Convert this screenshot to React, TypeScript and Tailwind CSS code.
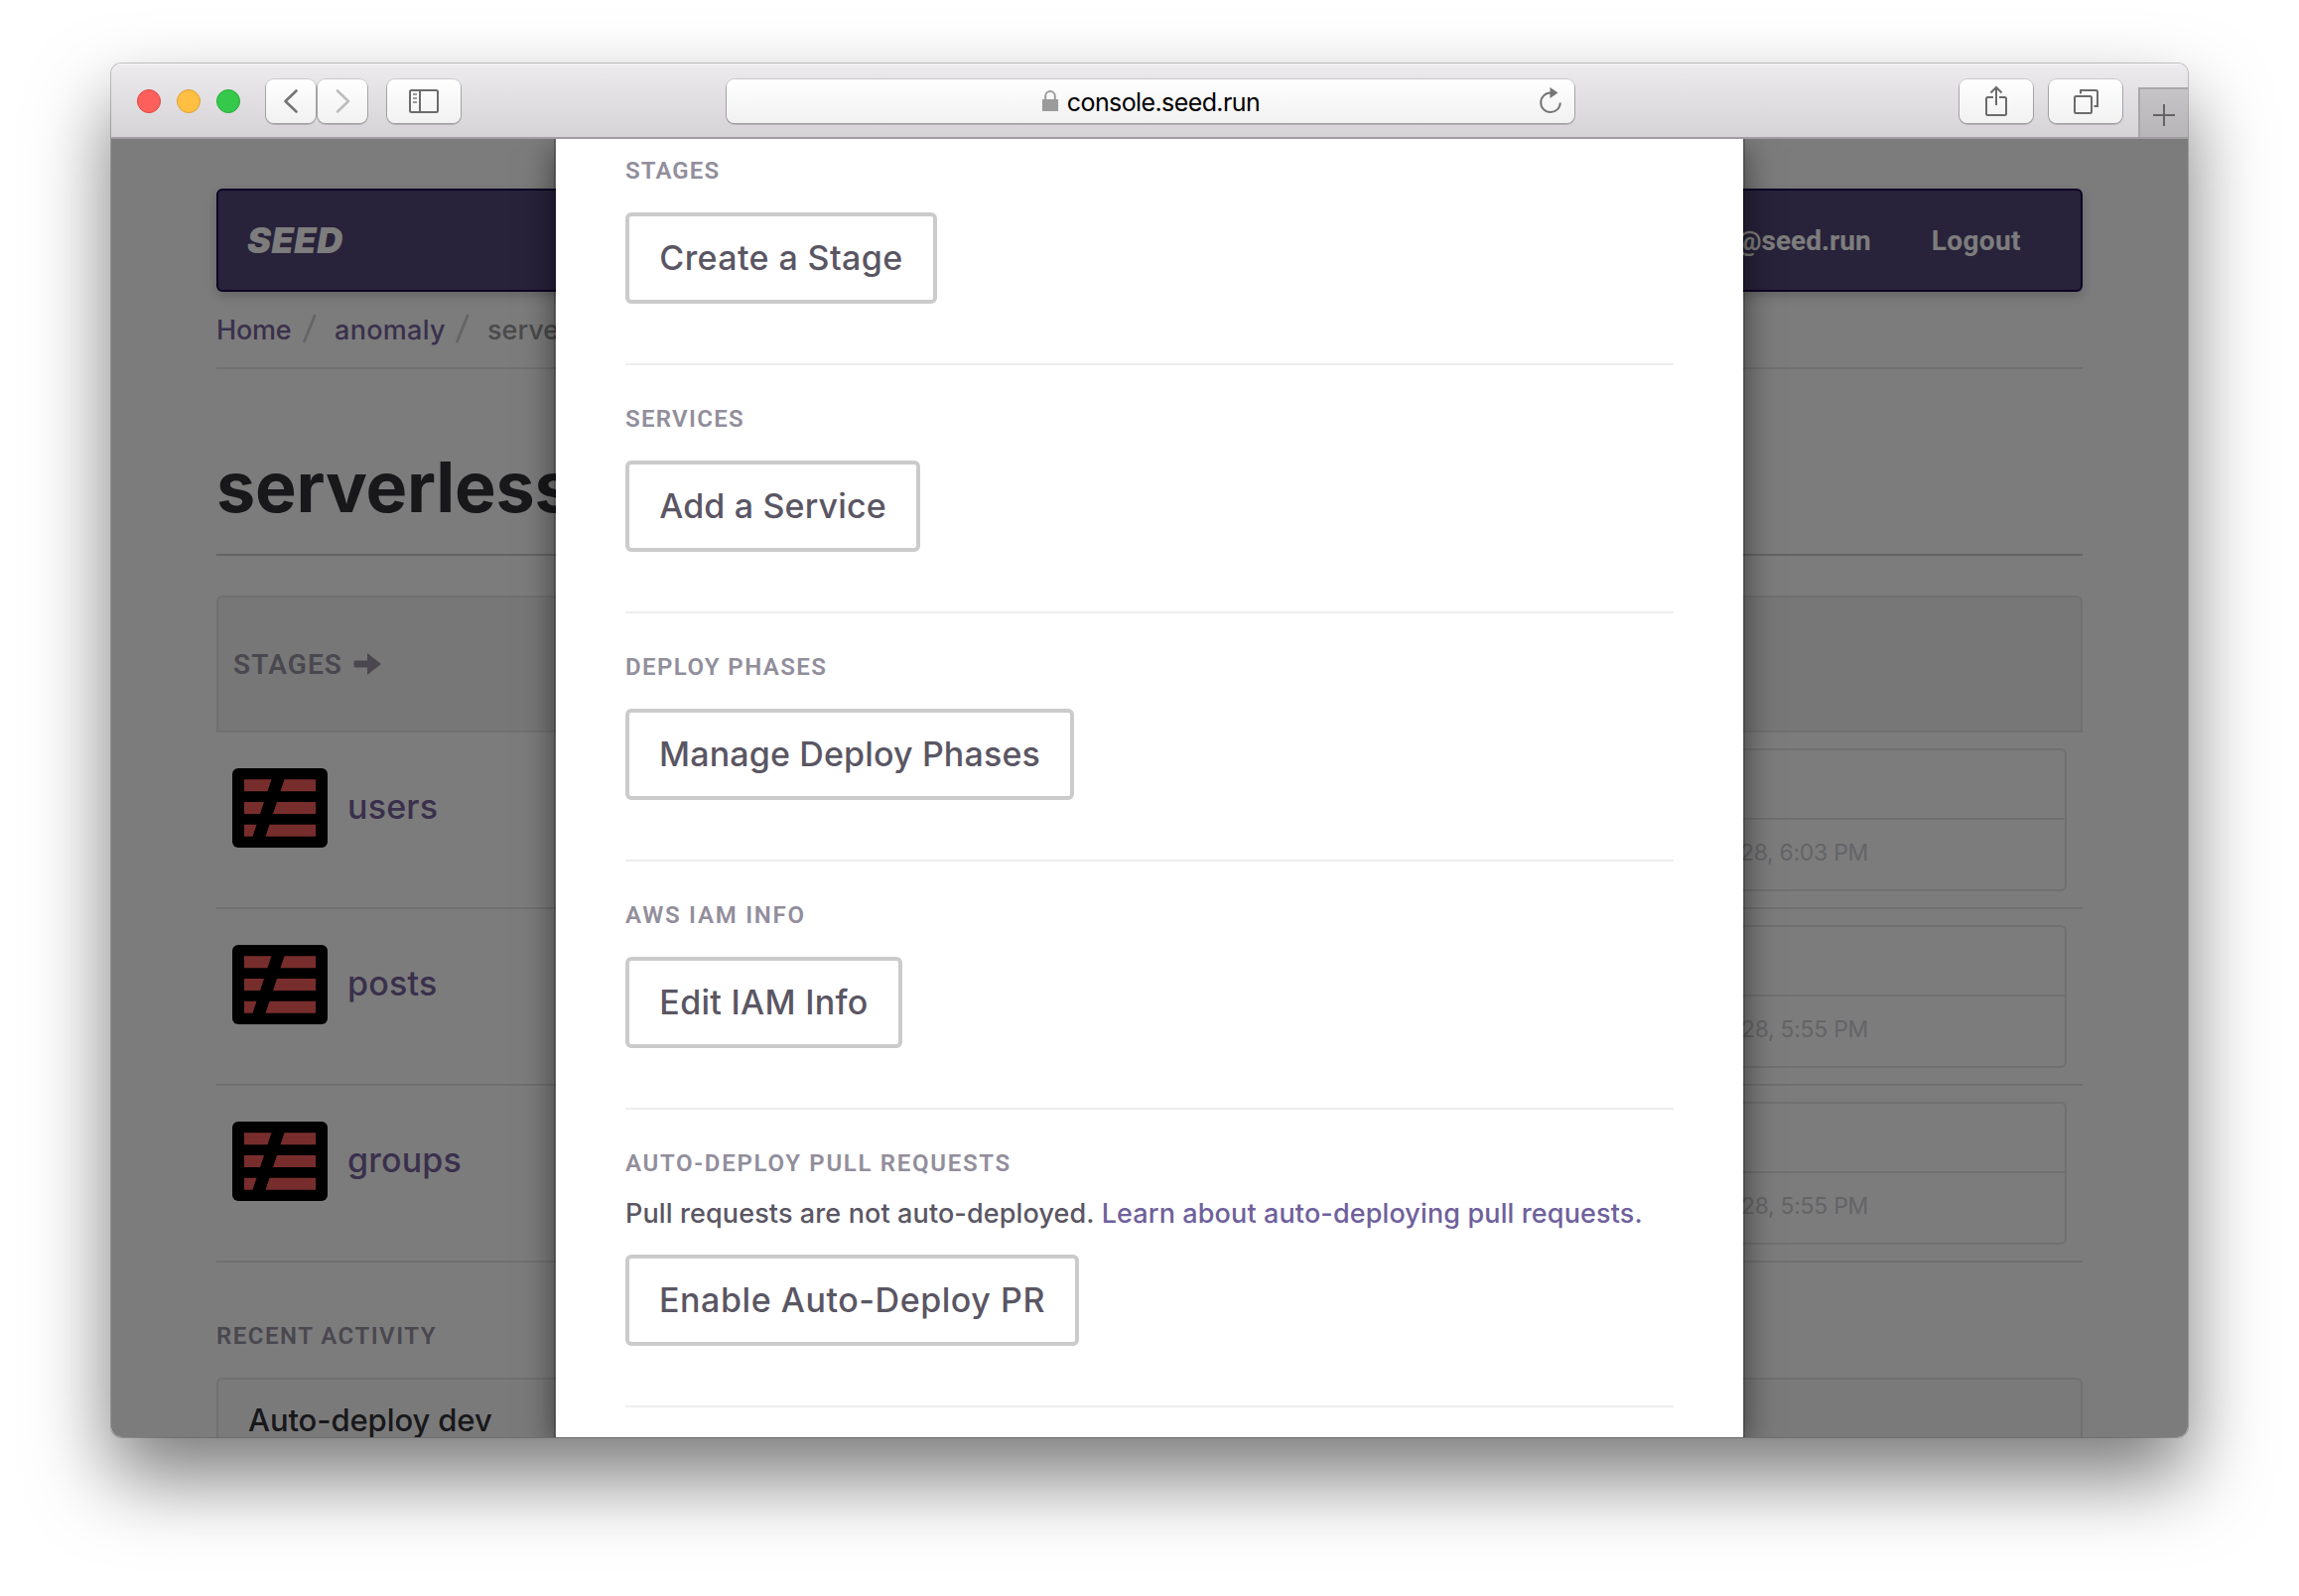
import React from "react";

const label = "font-['Roboto',sans-serif] font-semibold";

type Section = { title: string; titleClass: string; button: string; buttonClass: string; note?: boolean };

const sections: Section[] = [
  { title: "STAGES", titleClass: "tracking-[1.1px]", button: "Create a Stage", buttonClass: "w-[314px] tracking-[0.4px]" },
  { title: "SERVICES", titleClass: "tracking-[1.3px]", button: "Add a Service", buttonClass: "w-[297px] tracking-[0.15px]" },
  { title: "DEPLOY PHASES", titleClass: "tracking-[1.4px]", button: "Manage Deploy Phases", buttonClass: "w-[452px] tracking-[0.15px]" },
  { title: "AWS IAM INFO", titleClass: "tracking-[1.75px]", button: "Edit IAM Info", buttonClass: "w-[279px] tracking-[0.3px]" },
  { title: "AUTO-DEPLOY PULL REQUESTS", titleClass: "tracking-[1.7px]", button: "Enable Auto-Deploy PR", buttonClass: "w-[457px] tracking-[0.55px]", note: true },
];

const services = [
  { name: "users", time: "28, 6:03 PM" },
  { name: "posts", time: "28, 5:55 PM" },
  { name: "groups", time: "28, 5:55 PM" },
];

function ToolbarButton({ className, children }: { className: string; children: React.ReactNode }) {
  return (
    <div
      className={
        "flex h-11 shrink-0 items-center justify-center rounded-[8px] bg-linear-to-b from-white to-[#f1f1f1] shadow-[0_0_0_1px_rgba(0,0,0,0.13),0_1px_0_1px_rgba(0,0,0,0.16)] " +
        className
      }
    >
      {children}
    </div>
  );
}

function TitleBar() {
  return (
    <div className="flex h-[76px] shrink-0 border-b-2 border-[#a09da1] bg-linear-to-b from-[#edebee] to-[#d5d3d6] shadow-[inset_0_1px_0_#f8f7f8]">
      <div className="flex w-[620px] shrink-0 pt-4">
        <div className="flex gap-4 pt-[10px] pl-[26px]">
          <span className="size-6 rounded-full border border-[#e0443f] bg-[#fd605b]" />
          <span className="size-6 rounded-full border border-[#dfa034] bg-[#febf42]" />
          <span className="size-6 rounded-full border border-[#2aab38] bg-[#34c94a]" />
        </div>
        <div className="flex gap-[2px] pl-[26px]">
          <ToolbarButton className="w-[50px]">
            <svg width="50" height="44" viewBox="0 0 50 44" fill="none" stroke="#747474" strokeWidth="2.6" strokeLinecap="round" strokeLinejoin="round">
              <path d="M30.500 11.500 19.500 22l11 10.500" />
            </svg>
          </ToolbarButton>
          <ToolbarButton className="w-[50px]">
            <svg width="50" height="44" viewBox="0 0 50 44" fill="none" stroke="#bdbdbd" strokeWidth="2.6" strokeLinecap="round" strokeLinejoin="round">
              <path d="M20 11.500 31 22 20 32.500" />
            </svg>
          </ToolbarButton>
        </div>
        <ToolbarButton className="ml-5 w-[74px]">
          <svg width="74" height="44" viewBox="0 0 74 44" fill="none" stroke="#6b6b6b" strokeWidth="2">
            <rect x="23" y="11" width="28" height="22" rx="1.5" />
            <path d="M33 11v22" />
            <path d="M26 15h4M26 19h4M26 23h4" stroke="#9a9a9a" />
          </svg>
        </ToolbarButton>
      </div>
      <div className="flex flex-1 pt-4">
        <ToolbarButton className="relative w-[854px]">
          <svg width="18" height="22" viewBox="0 0 18 22" fill="none">
            <path d="M4.200 11V5.800a4.800 4.800 0 0 1 9.600 0V11" stroke="#9b9b9b" strokeWidth="2" />
            <rect x="1" y="9" width="16" height="12" fill="#9b9b9b" />
          </svg>
          <span className="ml-2 pt-[2px] font-['Inter',sans-serif] text-[25px] leading-none tracking-[-0.600px] text-black">console.seed.run</span>
          <svg className="absolute top-[7px] right-3" width="24" height="30" viewBox="0 0 24 30" fill="none">
            <path d="M13.500 6.500H12a9.800 9.800 0 1 0 9.800 10" stroke="#757575" strokeWidth="2" />
            <path d="M11.500 1v11l8-5.500z" fill="#757575" />
          </svg>
        </ToolbarButton>
        <div className="flex-1" />
        <ToolbarButton className="w-[74px]">
          <svg width="74" height="44" viewBox="0 0 74 44" fill="none" stroke="#6b6b6b" strokeWidth="2">
            <path d="M34 18h-5.500a1.500 1.500 0 0 0-1.500 1.500v15a1.500 1.500 0 0 0 1.500 1.500h17a1.500 1.500 0 0 0 1.500-1.500v-15a1.500 1.500 0 0 0-1.500-1.500H40" />
            <path d="M37 26V8M31.500 13.500 37 8l5.500 5.500" />
          </svg>
        </ToolbarButton>
        <ToolbarButton className="mr-4 ml-4 w-[74px]">
          <svg width="74" height="44" viewBox="0 0 74 44" fill="none" stroke="#6b6b6b" strokeWidth="2">
            <rect x="26" y="17" width="17" height="17" rx="1.5" />
            <path d="M32 14.500V11H47.500a1.500 1.500 0 0 1 1.500 1.500V27H45.500" />
          </svg>
        </ToolbarButton>
      </div>
      <div className="mt-6 flex w-[50px] shrink-0 items-center justify-center border-t-2 border-l-2 border-[#a9a7aa] bg-linear-to-b from-[#c6c4c7] to-[#b8b5b9] pt-[3px] pr-px">
        <svg width="22" height="22" viewBox="0 0 22 22" stroke="#656465" strokeWidth="2">
          <path d="M11 0v22M0 11h22" />
        </svg>
      </div>
    </div>
  );
}

function ServerlessIcon() {
  return (
    <svg className="shrink-0 rounded-[6px]" width="96" height="80" viewBox="0 0 96 80">
      <rect width="96" height="80" fill="#000" />
      <g fill="#f15b5b">
        <path d="M12 11.300H39.500L35.500 23.300H12zM52.500 11.300H84v12H48.500z" />
        <path d="M12 34H32L28 46H12zM45 34H84v12H41z" />
        <path d="M12 56.700H24.500L20.500 68.700H12zM37.500 56.700H84v12H33.500z" />
      </g>
    </svg>
  );
}

function Slash({ className }: { className: string }) {
  return (
    <svg className={"shrink-0 " + className} width="16" height="30" viewBox="0 0 16 30" fill="none" stroke="#cacaca" strokeWidth="2.8" strokeLinecap="round">
      <path d="M2.500 28 13 2" />
    </svg>
  );
}

function ConsolePage() {
  return (
    <div className="flex h-full flex-col bg-[#f9f9f9] pr-[106px] pl-[106px] font-['Inter',sans-serif]">
      <div className="mt-[50px] flex h-[104px] shrink-0 items-center justify-between rounded-[6px] border-2 border-[#1a0848] bg-[#504474] pr-[60px] pl-[29px] text-[#fbfbfb] shadow-[0_4px_12px_rgba(0,0,0,0.2)]">
        <span className="pb-px text-[36px] leading-10 font-black tracking-[0.5px] italic">SEED</span>
        <div className="flex gap-[61px] pt-[2px] font-['Roboto',sans-serif] text-[28px] leading-10 font-bold">
          <span>@seed.run</span>
          <span className="tracking-[0.4px]">Logout</span>
        </div>
      </div>
      <div className="flex h-[78px] shrink-0 items-center border-b-2 border-[#e0e0e0] pt-[2px] text-[27px] font-[450] text-[#756099]">
        <span className="w-[86px] tracking-[-0.2px]">Home</span>
        <Slash className="mt-[-5px]" />
        <span className="ml-[17px] w-[121px] tracking-[0.3px]">anomaly</span>
        <Slash className="mt-[-5px]" />
        <span className="ml-[17px] text-[#949498]">serverless</span>
      </div>
      <div className="h-[188px] shrink-0 border-b-2 border-[#c8c8c8] pt-[79px]">
        <h1 className="text-[70px] leading-[80px] font-[650] tracking-[-0.2px] whitespace-nowrap text-[#303036]">serverless</h1>
      </div>
      <div className="mt-10 flex h-[138px] shrink-0 items-center rounded-t-[6px] border-2 border-[#e0e0e0] bg-[#efefef] pl-[15px] text-[#948f9e]">
        <span className={label + " pt-px text-[28px] leading-10 tracking-[1.1px]"}>STAGES</span>
        <svg className="ml-[11px]" width="28" height="22" viewBox="0 0 28 22" fill="currentColor">
          <path d="M2 7.500H14V0L28 11 14 22V14.500H2a1.500 1.500 0 0 1-1.500-1.500V9A1.500 1.500 0 0 1 2 7.500z" />
        </svg>
      </div>
      {services.map((s) => (
        <div key={s.name} className="flex h-[178px] shrink-0 items-start border-b-2 border-[#e0e0e0] pr-4 pl-4">
          <div className="flex w-[400px] items-center gap-5 pt-9">
            <ServerlessIcon />
            <span className="pb-[2px] text-[34px] leading-[44px] font-[450] tracking-[0.2px] text-[#756099]">{s.name}</span>
          </div>
          <div className="mt-4 ml-auto h-36 w-[400px] rounded-[6px] border-2 border-[#e0e0e0]">
            <div className="h-[68px]" />
            <div className="flex h-[72px] items-center justify-end border-t-2 border-[#e0e0e0] pr-[198px] pb-[3px] text-[23px] tracking-[-0.3px] text-[#c8c8ce]">{s.time}</div>
          </div>
        </div>
      ))}
      <div className={label + " mt-[60px] shrink-0 text-[24px] leading-7 tracking-[1.5px] text-[#948f9e]"}>RECENT ACTIVITY</div>
      <div className="mt-7 h-[120px] shrink-0 rounded-t-[6px] border-2 border-[#e0e0e0] bg-[#f5f5f5] pt-[21px] pl-[30px] text-[31px] leading-10 font-[450] tracking-[-0.1px] text-[#303036]">Auto-deploy dev</div>
    </div>
  );
}

function SettingsModal() {
  return (
    <div className="flex h-full w-[1200px] flex-col border-x-2 border-black/20 bg-white bg-clip-padding px-[70px] font-['Inter',sans-serif] shadow-[0_10px_30px_rgba(0,0,0,0.5)]">
      <div className="mt-[-22px]">
        {sections.map((s) => (
          <section key={s.title} className="border-b-2 border-[#eeeeee] pt-10 pb-[60px]">
            <h2 className={label + " text-[24px] leading-7 text-[#928e9c] " + s.titleClass}>{s.title}</h2>
            {s.note && (
              <p className="mt-[17px] mb-[-7px] text-[27px] leading-10 font-[450] tracking-[0.12px] whitespace-nowrap text-[#5a5663]">
                Pull requests are not auto-deployed. <a className="text-[#6f609c]">Learn about auto-deploying pull requests.</a>
              </p>
            )}
            <button className={"mt-7 flex h-[92px] items-center justify-center rounded-[6px] border-4 border-[#cbcbcb] text-[34px] leading-10 font-[450] whitespace-nowrap text-[#5a5663] " + s.buttonClass}>
              {s.button}
            </button>
          </section>
        ))}
      </div>
    </div>
  );
}

export default function App() {
  return (
    <div className="h-[1608px] w-[2316px] overflow-hidden bg-white pt-16 pl-28">
      <div className="h-[1384px] w-[2092px] rounded-t-[10px] rounded-b-[11px] shadow-[0_0_0_1px_rgba(0,0,0,0.22),0_40px_80px_rgba(0,0,0,0.53)]">
        <div className="flex h-full flex-col overflow-hidden rounded-t-[10px] rounded-b-[11px]">
          <TitleBar />
          <div className="relative flex-1 overflow-hidden">
            <ConsolePage />
            <div className="absolute inset-0 flex justify-center bg-black/50">
              <SettingsModal />
            </div>
          </div>
        </div>
      </div>
    </div>
  );
}
